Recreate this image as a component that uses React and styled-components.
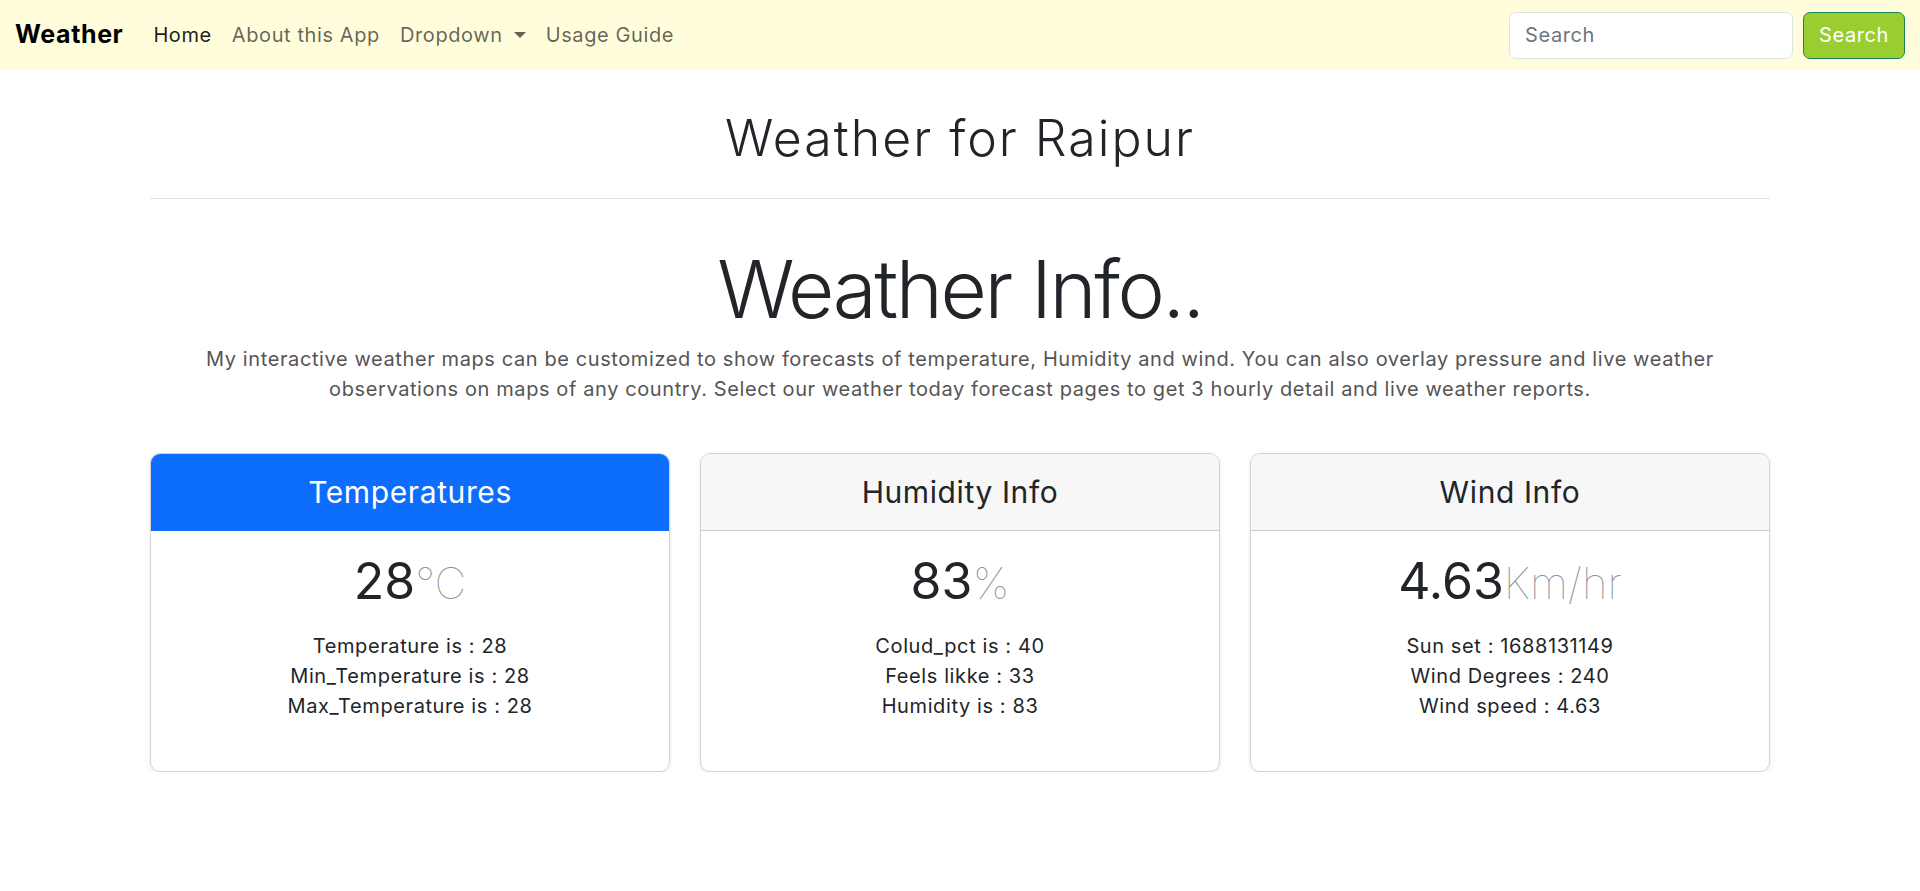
import React from 'react';
import styled, { createGlobalStyle } from 'styled-components';

const GlobalStyle = createGlobalStyle`
  * { box-sizing: border-box; }
  body {
    margin: 0;
    font-family: Inter, "Open Sans", sans-serif;
    font-size: 20px;
    line-height: 1.5;
    letter-spacing: 0.03em;
    color: #212529;
    background: #fff;
  }
`;

const Navbar = styled.nav`
  display: flex;
  align-items: center;
  justify-content: space-between;
  height: 70px;
  padding: 0 15px;
  background-color: #fffddc;
`;

const NavLeft = styled.div`
  display: flex;
  align-items: center;
`;

const Brand = styled.a`
  font-size: 25px;
  font-weight: 700;
  color: #000;
  margin-right: 20px;
  text-decoration: none;
`;

const NavLink = styled.a`
  padding: 10px;
  font-size: 20px;
  color: ${(p) => (p.$active ? 'rgba(0,0,0,0.9)' : 'rgba(0,0,0,0.62)')};
  text-decoration: none;
  display: flex;
  align-items: center;
`;

const Caret = styled.span`
  display: inline-block;
  margin-left: 11px;
  border-top: 6px solid;
  border-right: 6px solid transparent;
  border-left: 6px solid transparent;
`;

const SearchForm = styled.form`
  display: flex;
  gap: 10px;
`;

const SearchInput = styled.input`
  width: 284px;
  height: 47px;
  padding: 7px 15px;
  font: inherit;
  font-size: 20px;
  letter-spacing: 0.03em;
  color: #212529;
  background: #fff;
  border: 1px solid #dee2e6;
  border-radius: 7px;
  outline: none;
  &::placeholder { color: #6c757d; }
`;

const SearchButton = styled.button`
  height: 47px;
  padding: 0 15px;
  font: inherit;
  font-size: 20px;
  letter-spacing: 0.03em;
  color: #fff;
  background-color: #9acd32;
  border: 1px solid #198754;
  border-radius: 7px;
`;

const Container = styled.main`
  width: 1620px;
  margin: 0 auto;
`;

const PageTitle = styled.h1`
  margin: 0;
  padding-top: 38px;
  font-size: 50px;
  font-weight: 300;
  line-height: 1.2;
  letter-spacing: 0.04em;
  text-align: center;
`;

const Rule = styled.hr`
  margin: 30px 0 0;
  border: 0;
  border-top: 1px solid #e2e3e5;
`;

const Hero = styled.section`
  text-align: center;
  padding-top: 42px;
`;

const Display = styled.h2`
  margin: 0;
  font-size: 80px;
  font-weight: 300;
  line-height: 1.2;
  letter-spacing: -0.03em;
`;

const Lead = styled.p`
  margin: 7px 0 0;
  font-size: 20px;
  line-height: 30px;
  color: #555;
`;

const CardRow = styled.div`
  display: grid;
  grid-template-columns: repeat(3, 1fr);
  gap: 30px;
  margin-top: 49px;
`;

const Card = styled.div`
  border: 1px solid rgba(0, 0, 0, 0.175);
  border-radius: 10px;
  overflow: hidden;
  box-shadow: 0 2px 5px rgba(0, 0, 0, 0.075);
  text-align: center;
`;

const CardHeader = styled.div`
  padding: 20px;
  background-color: ${(p) => (p.$primary ? '#0d6efd' : '#f7f7f7')};
  color: ${(p) => (p.$primary ? '#fff' : '#212529')};
  border-bottom: 1px solid ${(p) => (p.$primary ? '#0d6efd' : 'rgba(0,0,0,0.175)')};
`;

const CardHeading = styled.h4`
  margin: 0;
  font-size: 30px;
  font-weight: 400;
  line-height: 1.2;
`;

const CardBody = styled.div`
  padding: 20px;
`;

const Value = styled.h3`
  margin: 0 0 10px;
  font-size: 50px;
  font-weight: 400;
  line-height: 1.2;
  letter-spacing: 0;
`;

const Unit = styled.small`
  font-size: 0.875em;
  font-weight: 100;
  color: #8c9298;
`;

const Facts = styled.ul`
  list-style: none;
  margin: 20px 0 30px;
  padding: 0;
  font-size: 20px;
  line-height: 30px;
`;

const cards = [
  {
    title: 'Temperatures',
    primary: true,
    value: '28',
    unit: '°C',
    facts: ['Temperature is : 28', 'Min_Temperature is : 28', 'Max_Temperature is : 28'],
  },
  {
    title: 'Humidity Info',
    value: '83',
    unit: '%',
    facts: ['Colud_pct is : 40', 'Feels likke : 33', 'Humidity is : 83'],
  },
  {
    title: 'Wind Info',
    value: '4.63',
    unit: 'Km/hr',
    facts: ['Sun set : 1688131149', 'Wind Degrees : 240', 'Wind speed : 4.63'],
  },
];

const App = () => {
  return (
    <>
      <GlobalStyle />
      <Navbar>
        <NavLeft>
          <Brand href="#">Weather</Brand>
          <NavLink href="#" $active>Home</NavLink>
          <NavLink href="#">About this App</NavLink>
          <NavLink href="#">Dropdown<Caret /></NavLink>
          <NavLink href="#">Usage Guide</NavLink>
        </NavLeft>
        <SearchForm onSubmit={(e) => e.preventDefault()}>
          <SearchInput type="search" placeholder="Search" />
          <SearchButton type="submit">Search</SearchButton>
        </SearchForm>
      </Navbar>
      <Container>
        <PageTitle>Weather for Raipur</PageTitle>
        <Rule />
        <Hero>
          <Display>Weather Info..</Display>
          <Lead>
            My interactive weather maps can be customized to show forecasts of temperature, Humidity and wind. You can also overlay pressure and live weather
            <br />
            observations on maps of any country. Select our weather today forecast pages to get 3 hourly detail and live weather reports.
          </Lead>
        </Hero>
        <CardRow>
          {cards.map((card) => (
            <Card key={card.title}>
              <CardHeader $primary={card.primary}>
                <CardHeading>{card.title}</CardHeading>
              </CardHeader>
              <CardBody>
                <Value>
                  {card.value}
                  <Unit>{card.unit}</Unit>
                </Value>
                <Facts>
                  {card.facts.map((f) => (
                    <li key={f}>{f}</li>
                  ))}
                </Facts>
              </CardBody>
            </Card>
          ))}
        </CardRow>
      </Container>
    </>
  );
};

export default App;
